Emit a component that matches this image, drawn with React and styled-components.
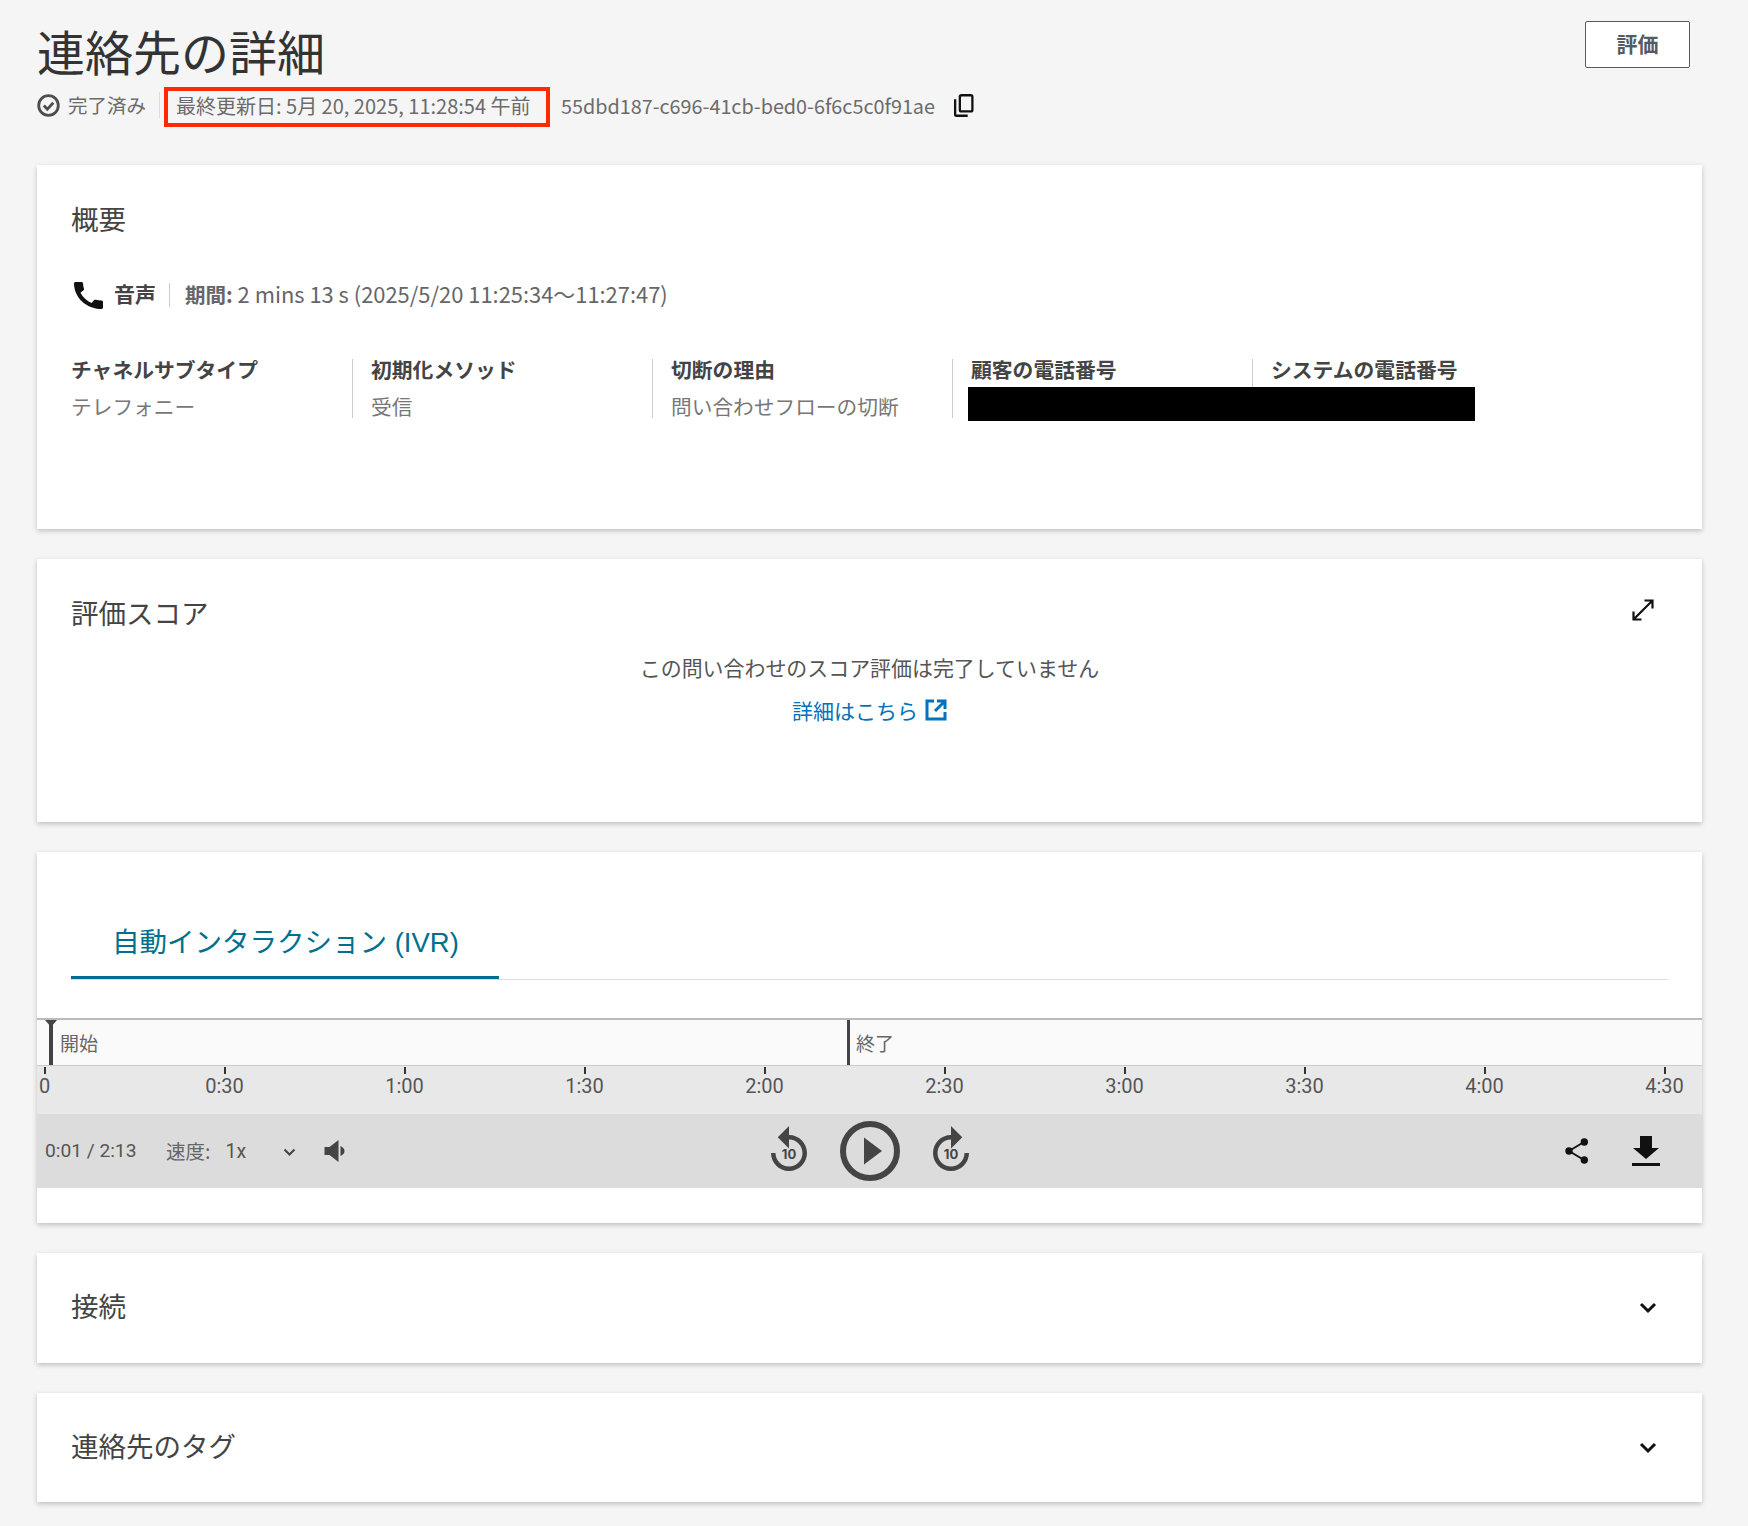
import React from "react";
import styled, { createGlobalStyle } from "styled-components";

const JP = `"Noto Sans CJK JP", "Noto Sans", sans-serif`;
const RB = `Roboto, "Noto Sans CJK JP", sans-serif`;

const Global = createGlobalStyle`
  html, body { margin: 0; padding: 0; background: #f5f5f5; }
  body { font-family: ${JP}; color: #444; }
  * { box-sizing: border-box; }
`;
const Page = styled.div`
  width: 1748px; height: 1526px; padding: 0 46px 0 37px; overflow: hidden;
`;
const Header = styled.header`
  display: flex; justify-content: space-between; align-items: flex-start; height: 165px;
`;
const TitleBlock = styled.div`padding-top: 22px;`;
const Title = styled.h1`
  margin: 0; font-size: 48px; line-height: 56px; font-weight: 400; color: #333;
`;
const Meta = styled.div`
  display: flex; align-items: center; height: 40px; margin-top: 9px; color: #6b6b6b;
`;
const Status = styled.span`
  display: flex; align-items: center; gap: 8px; font-size: 19.5px; width: 123px; line-height: 24px;
  height: 26px; border-right: 1px solid #ddd; position: relative; top: -2px;
`;
const RedBox = styled.span`
  display: flex; align-items: center; height: 40px; width: 386px; margin-left: 4px;
  border: 4px solid #ff2a00; padding: 0 0 4px 8px; font-size: 20px; white-space: nowrap;
`;
const Uuid = styled.span`
  margin-left: 11px; font-size: 19.8px; white-space: nowrap; width: 375px; position: relative; top: -2px;
`;
const CopyIcon = styled.svg`margin: -4px 0 0 17px; width: 21px; height: 23px;`;
const EvalButton = styled.button`
  margin: 21px 12px 0 0; width: 105px; height: 47px; border: 1px solid #545b64; border-radius: 2px;
  background: #fff; color: #545b64; font: 700 21px/40px ${JP}; padding: 0 0 3px;
`;
const Stack = styled.div`display: flex; flex-direction: column; gap: 30px;`;
const Card = styled.section`
  position: relative; background: #fff; box-shadow: 0 2px 5px rgba(0,0,0,.22); padding: ${p => p.$pad || "0 34px"};
`;
const CardHead = styled.div`
  display: flex; justify-content: space-between; align-items: center; padding-top: 33px; height: 72px;
`;
const CardTitle = styled.h2`
  margin: 0 0 ${p => p.$lift || 0}px; font-size: 27.5px; line-height: 36px; font-weight: 400; color: #444;
`;
const ExpandBtn = styled.svg`width: 22px; height: 22px; margin: -4px 14px 0 0;`;
const ChannelRow = styled.div`
  display: flex; align-items: center; height: 30px; margin-top: 43px; font-size: 21.9px; color: #666;
`;
const PhoneIcon = styled.svg`width: 29px; height: 27px; margin: 0 11px 0 3px;`;
const ChannelName = styled.strong`font-weight: 700; color: #444; font-size: 21px; position: relative; top: -2px;`;
const Pipe = styled.span`width: 1px; height: 24px; background: #ccc; margin: 0 15px 0 13px;`;
const Duration = styled.span`white-space: nowrap; position: relative; top: -2px;`;
const DurationLabel = styled.b`font-weight: 700; font-size: 20.5px;`;
const Columns = styled.div`display: flex; margin-top: 49px; position: relative;`;
const Col = styled.div`
  width: ${p => p.$w || 300}px; height: 59px; padding-left: ${p => p.$first ? 0 : 18}px;
  border-left: ${p => p.$first ? "none" : "1px solid #ccc"};
`;
const ColLabel = styled.div`font-size: 20.8px; line-height: 22px; margin-top: -1px; font-weight: 700; color: #444; white-space: nowrap;`;
const ColValue = styled.div`font-size: 20.7px; line-height: 22px; margin-top: 15px; color: #777; white-space: nowrap;`;
const Redaction = styled.div`
  position: absolute; left: 897px; top: 28px; width: 507px; height: 34px; background: #000;
`;
const CardFoot = styled.div`height: ${p => p.$h}px;`;
const Centered = styled.div`
  font-size: 20.95px; line-height: 30px; text-align: center; color: #555; margin-top: ${p => p.$mt}px;
`;
const DocLink = styled.a`
  display: inline-flex; align-items: center; gap: 7px; color: #0073bb; font-size: 21px; line-height: 30px; text-decoration: none;
`;
const ExtIcon = styled.svg`width: 22px; height: 22px;`;
const TabBar = styled.div`
  margin: 0 34px; padding-top: 70px; border-bottom: 1px solid #ddd; display: flex;
`;
const Tab = styled.div`
  width: 428px; height: 57px; padding: 1px 0 0 41px; border-bottom: 3px solid #006f8f; color: #006f8f;
  font-size: 27.5px; line-height: 40px; white-space: nowrap; font-family: "Liberation Sans", ${JP};
`;
const Track = styled.div`
  margin-top: 38px; display: flex; height: 48px; padding-left: 12px; background: #fafafa;
  border-top: 2px solid #bbb; border-bottom: 1px solid #ccc;
`;
const Segment = styled.div`
  position: relative; width: ${p => p.$w}px; border-left: ${p => p.$cap ? 4 : 3}px solid #444;
  padding-left: ${p => p.$cap ? 7 : 6}px;
  font-size: 19px; line-height: 46px; color: #666;
  &::before {
    content: ""; display: ${p => p.$cap ? "block" : "none"}; position: absolute; left: -8px; top: 0;
    border-left: 6px solid transparent; border-right: 6px solid transparent; border-top: 7px solid #444;
  }
`;
const Ticks = styled.div`
  display: flex; height: 48px; background: #e8e8e8; overflow: hidden;
`;
const TickCell = styled.div`
  flex: 0 0 180px; display: flex; flex-direction: column; align-items: center; margin-left: ${p => p.$ml || 0}px;
  font: 400 20px/24px ${RB}; color: #555;
  &::before { content: ""; width: 2px; height: 7px; background: #333; margin: 1px 0 0; }
`;
const Controls = styled.div`
  display: grid; grid-template-columns: 1fr auto 1fr; align-items: center; height: 74px; background: #dcdcdc;
  padding: 0 8px;
`;
const LeftCtl = styled.div`display: flex; align-items: center; color: #555; font-family: ${RB}; font-size: 19.5px;`;
const Time = styled.span`width: 91px; font-size: 19.2px; white-space: nowrap; margin-top: -2px;`;
const SpeedLabel = styled.span`margin: -2px 0 0 30px; font: 400 19.5px ${JP}; color: #666;`;
const SpeedValue = styled.span`margin-left: 15px; width: 57px;`;
const SmallChevron = styled.svg`width: 13px; height: 9px; margin: 3px 0 0 1px;`;
const Volume = styled.svg`width: 22px; height: 24px; margin-left: 28px;`;
const CenterCtl = styled.div`display: flex; align-items: center; gap: 33px;`;
const SkipIcon = styled.svg`width: 36px; height: 45px; margin-top: -5px; fill: #444;`;
const PlayIcon = styled.svg`width: 60px; height: 60px;`;
const RightCtl = styled.div`display: flex; align-items: center; justify-content: flex-end; gap: 44px; padding-right: 34px;`;
const ShareIcon = styled.svg`width: 23px; height: 26px;`;
const DownloadIcon = styled.svg`width: 28px; height: 30px;`;
const Accordion = styled.div`
  display: flex; align-items: center; justify-content: space-between; height: ${p => p.$h}px;
`;
const AccChevron = styled.svg`width: 18px; height: 12px; margin-right: 11px;`;

const Skip = ({ mirror }) => (
  <SkipIcon viewBox="4 1 16 20">
    <g transform={mirror ? "translate(24 0) scale(-1 1)" : undefined}>
      <path d="M12 5V1L7 6l5 5V7c3.3 0 6 2.7 6 6s-2.7 6-6 6-6-2.7-6-6H4c0 4.4 3.6 8 8 8s8-3.6 8-8-3.6-8-8-8z" />
    </g>
    <text x="12" y="15.7" textAnchor="middle" fontSize="5.8" fontWeight="700" fontFamily="Inter, sans-serif">10</text>
  </SkipIcon>
);
const Chev = () => (
  <AccChevron viewBox="0 0 18 12"><path d="M2 2l7 7 7-7" fill="none" stroke="#111" strokeWidth="3" /></AccChevron>
);

export default function App() {
  const ticks = ["0", "0:30", "1:00", "1:30", "2:00", "2:30", "3:00", "3:30", "4:00", "4:30"];
  return (
    <Page>
      <Global />
      <Header>
        <TitleBlock>
          <Title>連絡先の詳細</Title>
          <Meta>
            <Status>
              <svg width="23" height="23" viewBox="0 0 23 23"><circle cx="11.5" cy="11.5" r="9.8" fill="none" stroke="#4d4d4d" strokeWidth="2.8" /><path d="M6.8 11.5l3.5 3.6 6-6.4" fill="none" stroke="#4d4d4d" strokeWidth="2.8" /></svg>
              完了済み
            </Status>
            <RedBox>最終更新日: 5月 20, 2025, 11:28:54 午前</RedBox>
            <Uuid>55dbd187-c696-41cb-bed0-6f6c5c0f91ae</Uuid>
            <CopyIcon viewBox="0 0 20 22"><rect x="6.5" y="1.2" width="12" height="15.5" rx="1.5" fill="none" stroke="#111" strokeWidth="2.2" /><path d="M2 5v14.5c0 .8.6 1.3 1.3 1.3H14" fill="none" stroke="#111" strokeWidth="2.2" /></CopyIcon>
          </Meta>
        </TitleBlock>
        <EvalButton>評価</EvalButton>
      </Header>
      <Stack>
        <Card>
          <CardHead><CardTitle>概要</CardTitle></CardHead>
          <ChannelRow>
            <PhoneIcon viewBox="3 3 18 18" preserveAspectRatio="none"><path fill="#111" d="M20.01 15.38c-1.23 0-2.42-.2-3.53-.56-.35-.12-.74-.03-1.01.24l-1.57 1.97c-2.83-1.35-5.48-3.9-6.89-6.83l1.95-1.66c.27-.28.35-.67.24-1.02-.37-1.11-.56-2.3-.56-3.53 0-.54-.45-.99-.99-.99H4.19C3.65 3 3 3.24 3 3.99 3 13.28 10.73 21 20.01 21c.71 0 .99-.63.99-1.18v-3.45c0-.54-.45-.99-.99-.99z" /></PhoneIcon>
            <ChannelName>音声</ChannelName>
            <Pipe />
            <Duration><DurationLabel>期間:</DurationLabel> 2 mins 13 s (2025/5/20 11:25:34～11:27:47)</Duration>
          </ChannelRow>
          <Columns>
            <Col $first $w={281}><ColLabel>チャネルサブタイプ</ColLabel><ColValue>テレフォニー</ColValue></Col>
            <Col><ColLabel>初期化メソッド</ColLabel><ColValue>受信</ColValue></Col>
            <Col><ColLabel>切断の理由</ColLabel><ColValue>問い合わせフローの切断</ColValue></Col>
            <Col><ColLabel>顧客の電話番号</ColLabel></Col>
            <Col><ColLabel>システムの電話番号</ColLabel></Col>
            <Redaction />
          </Columns>
          <CardFoot $h={111} />
        </Card>
        <Card>
          <CardHead>
            <CardTitle>評価スコア</CardTitle>
            <ExpandBtn viewBox="0 0 22 22"><path d="M1.5 20.5L20.5 1.5M12.5 1.5h8v8M1.5 12.5v8h8" fill="none" stroke="#111" strokeWidth="2.2" /></ExpandBtn>
          </CardHead>
          <Centered $mt={21}>この問い合わせのスコア評価は完了していません</Centered>
          <Centered $mt={13}>
            <DocLink>詳細はこちら
              <ExtIcon viewBox="0 0 22 22"><path d="M9 2H2v18h18v-7M12 2h8v8M20 2L10 12" fill="none" stroke="#0073bb" strokeWidth="3" /></ExtIcon>
            </DocLink>
          </Centered>
          <CardFoot $h={97} />
        </Card>
        <Card $pad="0">
          <TabBar><Tab>自動インタラクション (IVR)</Tab></TabBar>
          <Track>
            <Segment $w={798} $cap>開始</Segment>
            <Segment $w={800}>終了</Segment>
          </Track>
          <Ticks>
            {ticks.map((t, i) => <TickCell key={t} $ml={i === 0 ? -82.5 : 0}>{t}</TickCell>)}
          </Ticks>
          <Controls>
            <LeftCtl>
              <Time>0:01 / 2:13</Time>
              <SpeedLabel>速度:</SpeedLabel>
              <SpeedValue>1x</SpeedValue>
              <SmallChevron viewBox="0 0 13 9"><path d="M1.5 1.5l5 5 5-5" fill="none" stroke="#444" strokeWidth="2" /></SmallChevron>
              <Volume viewBox="0 0 21 24"><path fill="#444" d="M0 8h5l9-7v22l-9-7H0z" /><path fill="#444" d="M16 7c2.5 1 4 3 4 5s-1.500 4-4 5z" /></Volume>
            </LeftCtl>
            <CenterCtl>
              <Skip />
              <PlayIcon viewBox="0 0 60 60"><circle cx="30" cy="30" r="27" fill="none" stroke="#444" strokeWidth="6" /><path fill="#444" d="M24 16.500l18 13.500-18 13.500z" /></PlayIcon>
              <Skip mirror />
            </CenterCtl>
            <RightCtl>
              <ShareIcon viewBox="0 0 23 26"><path d="M4 13L19 4M4 13l15 9" stroke="#111" strokeWidth="2" fill="none" /><circle cx="4" cy="13" r="3.700" fill="#111" /><circle cx="19.300" cy="4" r="3.700" fill="#111" /><circle cx="19.300" cy="22" r="3.700" fill="#111" /></ShareIcon>
              <DownloadIcon viewBox="0 0 28 30"><path fill="#111" d="M8 0h12v12h7L14 23 1 12h7zM0 27h28v3H0z" /></DownloadIcon>
            </RightCtl>
          </Controls>
          <CardFoot $h={35} />
        </Card>
        <Card><Accordion $h={110}><CardTitle $lift={6}>接続</CardTitle><Chev /></Accordion></Card>
        <Card><Accordion $h={109}><CardTitle $lift={6}>連絡先のタグ</CardTitle><Chev /></Accordion></Card>
      </Stack>
    </Page>
  );
}
